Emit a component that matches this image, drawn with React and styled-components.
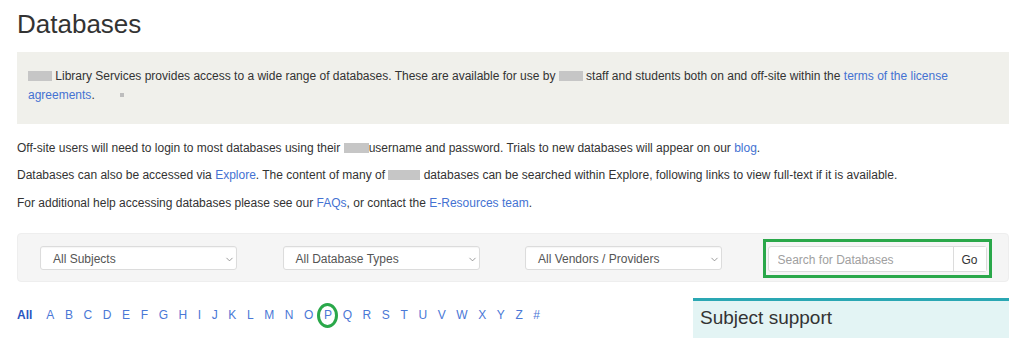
import React from 'react';
import styled, { createGlobalStyle } from 'styled-components';
import { ChevronDown } from 'lucide-react';

const GlobalStyle = createGlobalStyle`
  body {
    margin: 0;
    background: #fff;
    font-family: "Liberation Sans", Arial, sans-serif;
    font-size: 12px;
    color: #333;
  }
`;

const letters = 'ABCDEFGHIJKLMNOPQRSTUVWXYZ#'.split('');
const selects = ['All Subjects', 'All Database Types', 'All Vendors / Providers'];

export default function App() {
  return (
    <>
      <GlobalStyle />
      <Page>
        <Title>Databases</Title>
        <Intro>
          <p>
            <Blur w={24} /> Library Services provides access to a wide range of databases. These are
            available for use by <Blur w={24} /> staff and students both on and off-site within the{' '}
            <Link href="#">terms of the license agreements</Link>.<Dot />
          </p>
        </Intro>

        <Para>
          Off-site users will need to login to most databases using their <Blur w={25} />username and
          password. Trials to new databases will appear on our <Link href="#">blog</Link>.
        </Para>
        <Para>
          Databases can also be accessed via <Link href="#">Explore</Link>. The content of many of{' '}
          <Blur w={32} /> databases can be searched within Explore, following links to view full-text if
          it is available.
        </Para>
        <Para>
          For additional help accessing databases please see our <Link href="#">FAQs</Link>, or contact
          the <Link href="#">E-Resources team</Link>.
        </Para>

        <FilterPanel>
          {selects.map((s) => (
            <Select key={s}>
              <span>{s}</span>
              <ChevronDown size={11} strokeWidth={1.6} color="#777" />
            </Select>
          ))}
          <SearchGroup>
            <SearchInput placeholder="Search for Databases" />
            <GoButton>Go</GoButton>
          </SearchGroup>
        </FilterPanel>

        <BottomRow>
          <Alphabet>
            <Letter href="#" $active>All</Letter>
            {letters.map((l) => (
              <Letter key={l} href="#" $circled={l === 'P'}>
                {l}
              </Letter>
            ))}
          </Alphabet>
          <SubjectBox>
            <h2>Subject support</h2>
          </SubjectBox>
        </BottomRow>
      </Page>
    </>
  );
}

const Page = styled.div`
  padding: 0 15px 0 17px;
`;

const Title = styled.h1`
  margin: 10px 0 13.4px;
  font-size: 26px;
  line-height: 1.1;
  font-weight: 400;
  color: #333;
`;

const Intro = styled.div`
  background: #f0f0eb;
  padding: 15px 12px 18.5px 11px;
  margin-bottom: 16.4px;

  p {
    margin: 0;
    line-height: 1.6;
  }
`;

const Blur = styled.span`
  display: inline-block;
  width: ${(p) => p.w}px;
  height: 10px;
  background: #c6c6c6;
  vertical-align: -1px;
`;

const Dot = styled.span`
  display: inline-block;
  width: 4px;
  height: 4px;
  margin-left: 25px;
  background: #bdbdbd;
  vertical-align: 2px;
`;

const Link = styled.a`
  color: #4472d2;
  text-decoration: none;
`;

const Para = styled.p`
  margin: 0 0 10px;
  line-height: 1.4286;
`;

const FilterPanel = styled.div`
  margin-top: 21.5px;
  display: grid;
  grid-template-columns: 197px 197px 197px 219px;
  column-gap: 45.5px;
  align-items: start;
  padding: 12px 22px 9px;
  background: #f5f5f5;
  border: 1px solid #eeeeee;
  border-radius: 4px;
`;

const Select = styled.div`
  box-sizing: border-box;
  height: 24px;
  display: flex;
  align-items: center;
  justify-content: space-between;
  padding: 2px 1px 0 12px;
  background: #fff;
  border: 1px solid #dcdcdc;
  border-radius: 3px;
  box-shadow: inset 0 1px 1px rgba(0, 0, 0, 0.04);
  color: #555;
  font-size: 12px;
`;

const SearchGroup = styled.div`
  position: relative;
  box-sizing: border-box;
  height: 26px;
  display: flex;
  background: #fff;
  border: 1px solid #dcdcdc;
  border-radius: 3px;

  &::after {
    content: '';
    position: absolute;
    inset: -8px -6px -7px -6px;
    border: 3px solid #2aa84a;
    pointer-events: none;
  }
`;

const SearchInput = styled.input`
  flex: 1;
  min-width: 0;
  border: none;
  outline: none;
  padding: 2px 9px 0;
  background: transparent;
  font-family: "Liberation Sans", Arial, sans-serif;
  font-size: 12px;
  color: #555;

  &::placeholder {
    color: #a0a0a0;
  }
`;

const GoButton = styled.button`
  width: 33px;
  padding: 2px 0 0;
  border: none;
  border-left: 1px solid #dcdcdc;
  background: #fff;
  font-family: "Liberation Sans", Arial, sans-serif;
  font-size: 12px;
  color: #333;
`;

const BottomRow = styled.div`
  margin-top: 16px;
  display: grid;
  grid-template-columns: 1fr 316px;
  column-gap: 20px;
  align-items: start;
`;

const Alphabet = styled.div`
  display: flex;
  gap: 10.6px;
  padding-top: 8.8px;
  line-height: 1.4286;
  font-size: 12px;
`;

const Letter = styled.a`
  position: relative;
  color: ${(p) => (p.$active ? '#2a55bf' : '#4a78d6')};
  font-weight: ${(p) => (p.$active ? 700 : 400)};
  margin-right: ${(p) => (p.$active ? '3.4px' : '0')};
  text-decoration: none;

  &::after {
    content: '';
    display: ${(p) => (p.$circled ? 'block' : 'none')};
    position: absolute;
    top: -4px;
    bottom: -4px;
    left: -7px;
    right: -6px;
    border: 3px solid #2aa84a;
    border-radius: 50%;
  }
`;

const SubjectBox = styled.div`
  background: #e3f4f4;
  border-top: 3px solid #2aa7b3;
  padding: 7px 7px 20px;

  h2 {
    margin: 0;
    font-size: 19px;
    line-height: 1.1;
    font-weight: 400;
    color: #333;
  }
`;
